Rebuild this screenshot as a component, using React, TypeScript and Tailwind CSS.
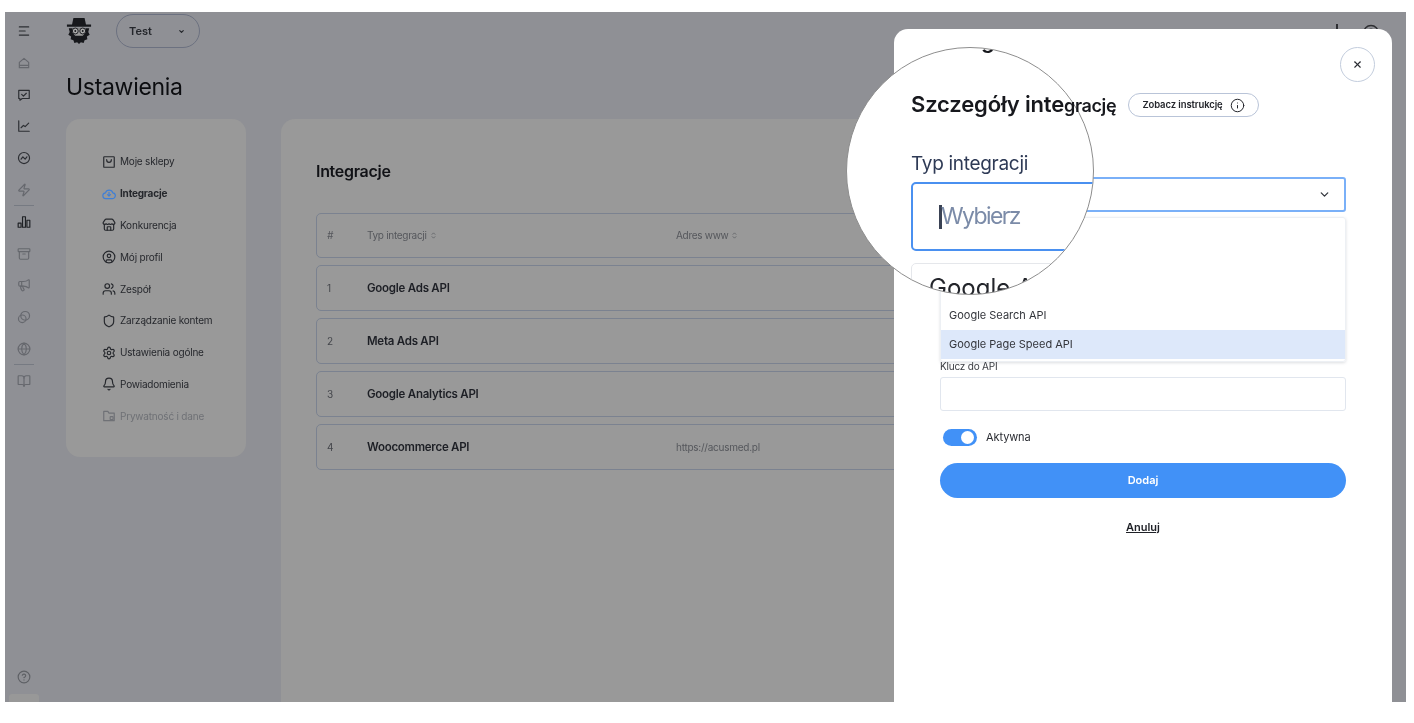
import React from "react";
import { Archive, Bell, BookOpen, ChevronDown, CircleHelp, CircleUser, Globe, Info, Megaphone, Settings, Shield, Store, Users, X, Zap } from "lucide-react";

const S = ({ children, c = "" }: { children: React.ReactNode; c?: string }) => (
  <svg viewBox="0 0 24 24" fill="none" stroke="currentColor" strokeWidth="2" strokeLinecap="round" strokeLinejoin="round" className={c}>{children}</svg>
);

const MenuIcon = (p: { c: string }) => <S c={p.c}><path d="M4 5h16M4 12h10M4 19h16" /></S>;
const HomeIcon = (p: { c: string }) => <S c={p.c}><path d="M4 11 12 4l8 7v9H4zM4 16h16" /></S>;
const ChatCheck = (p: { c: string }) => <S c={p.c}><path d="M3 4h18v14H9l-4 3v-3H3z" /><path d="m8 11 3 3 5-5" /></S>;
const LineUp = (p: { c: string }) => <S c={p.c}><path d="M3 3v18h18" /><path d="m7 15 4-4 3 2 6-6" /></S>;
const Pulse = (p: { c: string }) => <S c={p.c}><circle cx="12" cy="12" r="9.5" /><path d="m7 14 3-4 4 4 3-4" /></S>;
const Bars = (p: { c: string }) => <S c={p.c}><rect x="2" y="14" width="5" height="7" /><rect x="9.5" y="3" width="5" height="18" /><rect x="17" y="9" width="5" height="12" /></S>;
const Coins = (p: { c: string }) => <S c={p.c}><circle cx="14" cy="10" r="7.5" /><circle cx="9" cy="15" r="6.5" /></S>;
const Bag = (p: { c: string }) => <S c={p.c}><rect x="3" y="3" width="18" height="18" rx="1" /><path d="M8 8c0 6 8 6 8 0" /></S>;
const CloudDl = (p: { c: string }) => <S c={p.c}><path d="M7 20a5 5 0 0 1-1-10 6.500 6.500 0 0 1 12.500 0A5 5 0 0 1 17 20z" /><path d="M12 9v6M9.500 13l2.500 2.500 2.500-2.500" /></S>;
const FolderI = (p: { c: string }) => <S c={p.c}><path d="M21 20H3V4h7l2 3h9z" /><rect x="14" y="13" width="5" height="5" rx="1" /></S>;
const Sort = () => (
  <svg viewBox="0 0 8 12" className="ml-[4px] h-[7px] w-[5px]" fill="none" stroke="currentColor" strokeWidth="1.2"><path d="M1 4.500 4 1.500l3 3M1 7.500l3 3 3-3" /></svg>
);
const Logo = () => (
  <svg viewBox="0 0 28 30" className="h-[28px] w-[26px]">
    <path d="M8 1h12l1.500 7H27v2.500H1V8h5.500z" fill="#17181c" />
    <path d="M3 12h22l-1 4 1.500 3-3 2 .5 3-3 1-1 3-3-1-2 2-2-2-3 1-1-3-3-1 .5-3-3-2L4 16z" fill="#17181c" />
    <path d="M7 12h14v5l-3 3H10l-3-3z" fill="#9a9a9a" />
    <circle cx="10" cy="15" r="3.200" fill="#a8a8a8" stroke="#17181c" />
    <circle cx="18" cy="15" r="3.200" fill="#a8a8a8" stroke="#17181c" />
    <circle cx="10" cy="15" r="1" fill="#17181c" />
    <circle cx="18" cy="15" r="1" fill="#17181c" />
  </svg>
);

const cls = "h-[14px] w-[14px]";
const side = [
  { el: <MenuIcon c={cls} />, tone: "text-[#2c2e33]" },
  { el: <HomeIcon c={cls} />, tone: "text-[#66686e]" },
  { el: <ChatCheck c={cls} />, tone: "text-[#2c2e33]" },
  { el: <LineUp c={cls} />, tone: "text-[#2c2e33]" },
  { el: <Pulse c={cls} />, tone: "text-[#2c2e33]" },
  { el: <Zap className={cls} strokeWidth={2} />, tone: "text-[#66686e]", line: true },
  { el: <Bars c={cls} />, tone: "text-[#1f2125]" },
  { el: <Archive className={cls} strokeWidth={2} />, tone: "text-[#66686e]" },
  { el: <Megaphone className={cls} strokeWidth={2} />, tone: "text-[#66686e]" },
  { el: <Coins c={cls} />, tone: "text-[#66686e]" },
  { el: <Globe className={cls} strokeWidth={2} />, tone: "text-[#66686e]", line: true },
  { el: <BookOpen className={cls} strokeWidth={2} />, tone: "text-[#66686e]" },
];

const ic = "h-[14px] w-[14px]";
const menu = [
  { label: "Moje sklepy", el: <Bag c={ic} /> },
  { label: "Integracje", el: <CloudDl c={`${ic} text-[#3f7fd6]`} />, active: true },
  { label: "Konkurencja", el: <Store className={ic} strokeWidth={2} /> },
  { label: "Mój profil", el: <CircleUser className={ic} strokeWidth={2} /> },
  { label: "Zespół", el: <Users className={ic} strokeWidth={2} /> },
  { label: "Zarządzanie kontem", el: <Shield className={ic} strokeWidth={2} /> },
  { label: "Ustawienia ogólne", el: <Settings className={ic} strokeWidth={2} /> },
  { label: "Powiadomienia", el: <Bell className={ic} strokeWidth={2} /> },
  { label: "Prywatność i dane", el: <FolderI c={ic} />, muted: true },
];

const rows = [
  ["1", "Google Ads API", ""],
  ["2", "Meta Ads API", ""],
  ["3", "Google Analytics API", ""],
  ["4", "Woocommerce API", "https://acusmed.pl"],
];

export default function App() {
  return (
    <div className="h-[723px] w-[1414px] overflow-hidden bg-white pb-[21px] pl-[5px] pr-[8px] pt-[12px] font-['Inter',sans-serif] blur-[0.4px]">
      <div className="relative flex h-full overflow-hidden bg-[#8f9095]">
        <aside className="relative flex w-[38px] shrink-0 flex-col items-center pt-[3.200px]">
          {side.map((s, i) => (
            <React.Fragment key={i}>
              <div className={`flex h-[31.8px] w-full items-center justify-center ${s.tone}`}>{s.el}</div>
              {s.line && <div className="my-[-0.5px] h-[1px] w-[20px] shrink-0 bg-[#767a82]" />}
            </React.Fragment>
          ))}
          <CircleHelp className="mb-[10px] mt-auto h-[14px] w-[14px] text-[#5e6065]" strokeWidth={2} />
          <div className="h-[8px] w-[30px] rounded-t-[3px] bg-[#989898]" />
        </aside>

        <main className="flex min-w-0 flex-1 flex-col pl-[23px] pr-[26px] pt-[2px]">
          <header className="flex h-[34px] shrink-0 items-center">
            <Logo />
            <div className="ml-[24px] flex h-[34px] w-[84px] items-center rounded-full border border-[#6c7180] pl-[12px] text-[11px] font-semibold text-[#24262b]">
              Test
              <ChevronDown className="ml-[26px] h-[7px] w-[7px]" strokeWidth={4} />
            </div>
            <div className="ml-auto flex items-start gap-[24px] self-start pt-[10px]">
              <div className="h-[16px] w-[2px] bg-[#2e2f33]" />
              <CircleUser className="h-[18px] w-[18px] text-[#2e2f33]" />
            </div>
          </header>
          <h1 className="mt-[23px] h-[32px] text-[23px] font-normal leading-[32px] tracking-[-0.3px] text-[#0c0d10]">Ustawienia</h1>
          <div className="mt-[16px] flex min-h-0 flex-1 gap-[35px]">
            <nav className="h-[338px] w-[180px] shrink-0 rounded-[14px] bg-[#999999] pl-[36px] pt-[27px]">
              {menu.map((m) => (
                <div key={m.label} className={`flex h-[31.8px] items-center gap-[4px] text-[10px] tracking-[-0.2px] ${m.muted ? "text-[#6f7176]" : "text-[#26282d]"} ${m.active ? "font-bold" : ""}`}>
                  {m.el}
                  <span>{m.label}</span>
                </div>
              ))}
            </nav>
            <section className="min-w-0 flex-1 rounded-t-[14px] bg-[#999999] px-[35px] pt-[40px]">
              <h2 className="h-[24px] text-[16px] font-semibold leading-[24px] tracking-[-0.3px] text-[#111216]">Integracje</h2>
              <div className="mt-[30px] flex flex-col gap-[7px]">
                <div className="grid h-[45px] grid-cols-[40px_309px_1fr] items-center rounded-[5px] border border-[#7b8290] pl-[10px] text-[10px] tracking-[-0.3px] text-[#55575c]">
                  <span className="italic">#</span>
                  <span className="flex items-center">Typ integracji<Sort /></span>
                  <span className="flex items-center">Adres www<Sort /></span>
                </div>
                {rows.map((r) => (
                  <div key={r[0]} className="grid h-[46px] grid-cols-[40px_309px_1fr] items-center rounded-[5px] border border-[#7b8290] pl-[10px]">
                    <span className="text-[10px] text-[#44464b]">{r[0]}</span>
                    <span className="pt-[1px] text-[11.500px] font-semibold tracking-[-0.25px] text-[#1d1f25]">{r[1]}</span>
                    <span className="text-[10px] tracking-[-0.25px] text-[#55575c]">{r[2]}</span>
                  </div>
                ))}
              </div>
            </section>
          </div>
        </main>

        <div className="absolute bottom-0 left-[889px] top-[17px] w-[498px] rounded-t-[14px] bg-white px-[46px] pt-[64px]">
          <button className="absolute right-[17px] top-[18px] flex h-[35px] w-[35px] items-center justify-center rounded-full border border-[#c3cddd] text-[#2a2c33]">
            <X className="h-[11px] w-[11px]" strokeWidth={2.4} />
          </button>

          <div className="relative z-20 ml-[-29px] flex h-[24px] items-center">
            <h3 className="w-[205px] whitespace-nowrap text-[18px] font-semibold leading-[24px] text-[#17181d]">
              <span className="text-[22px] tracking-[-0.15px]">Szczegóły inte</span>
              <span className="tracking-[-0.4px]">grację</span>
            </h3>
            <button className="ml-[12px] flex h-[24px] w-[131px] items-center justify-center gap-[7px] rounded-full border border-[#b9c4d8] text-[9.500px] font-semibold tracking-[-0.1px] text-[#24262c]">
              Zobacz instrukcję
              <Info className="h-[15px] w-[15px]" strokeWidth={1.6} />
            </button>
          </div>

          <div className="mt-[60px] flex h-[35px] items-center justify-end rounded-[3px] border-2 border-[#7ab0f8] pr-[13px]">
            <ChevronDown className="h-[13px] w-[13px] text-[#33363d]" strokeWidth={2.4} />
          </div>

          <div className="mt-[5px] flex h-[145px] flex-col justify-end rounded-[3px] border border-[#edf0f4] pb-[2px] shadow-[0_1px_3px_rgba(60,70,90,0.18)]">
            <div className="flex h-[29px] items-center pl-[8px] text-[11px] text-[#33353b]">Google Search API</div>
            <div className="flex h-[29px] items-center bg-[#dde8fa] pl-[8px] text-[11px] text-[#33353b]">Google Page Speed API</div>
          </div>

          <label className="block h-[15px] text-[10px] leading-[9px] tracking-[-0.2px] text-[#3a3c42]">Klucz do API</label>
          <div className="h-[34px] rounded-[3px] border border-[#e1e6ee]" />

          <div className="ml-[3px] mt-[18px] flex h-[17px] items-center gap-[9px]">
            <div className="flex h-[17px] w-[34px] items-center justify-end rounded-full bg-[#4191f7] pr-[3px]">
              <div className="h-[13px] w-[13px] rounded-full bg-white" />
            </div>
            <span className="text-[11px] tracking-[-0.1px] text-[#2c2e34]">Aktywna</span>
          </div>

          <button className="mt-[17px] flex h-[35px] w-full items-center justify-center rounded-full bg-[#4191f7] text-[11px] font-semibold text-white">Dodaj</button>
          <div className="mt-[21px] text-center text-[11px] font-semibold leading-[16px] text-[#1f2127] underline">Anuluj</div>

          <div className="absolute left-[-48px] top-[18px] z-10 h-[248px] w-[248px] overflow-hidden rounded-full border border-[#8e8e8e] bg-white pl-[64px]">
            <div className="mt-[-21px] h-[26px] whitespace-nowrap pl-[30px] text-[22px] font-semibold leading-[26px] text-[#17181d]">Integracje</div>
            <div className="mt-[98px] h-[26px] whitespace-nowrap text-[19px] leading-[26px] tracking-[-0.3px] text-[#2e3a55]">Typ integracji</div>
            <div className="mt-[5px] flex h-[69px] w-[300px] items-center rounded-[5px] border-2 border-[#4a90f0] pl-[26px]">
              <div className="h-[24px] w-[3px] bg-[#3a4254]" />
              <span className="ml-[-1px] text-[23px] tracking-[-1.6px] text-[#7b8ba8]">Wybierz</span>
            </div>
            <div className="mt-[12px] h-[60px] w-[300px] rounded-[5px] border border-[#e5e7eb] pl-[17px] pt-[8px] text-[24px] leading-[32px] text-[#23252b]">Google Ads</div>
          </div>
        </div>
      </div>
    </div>
  );
}
